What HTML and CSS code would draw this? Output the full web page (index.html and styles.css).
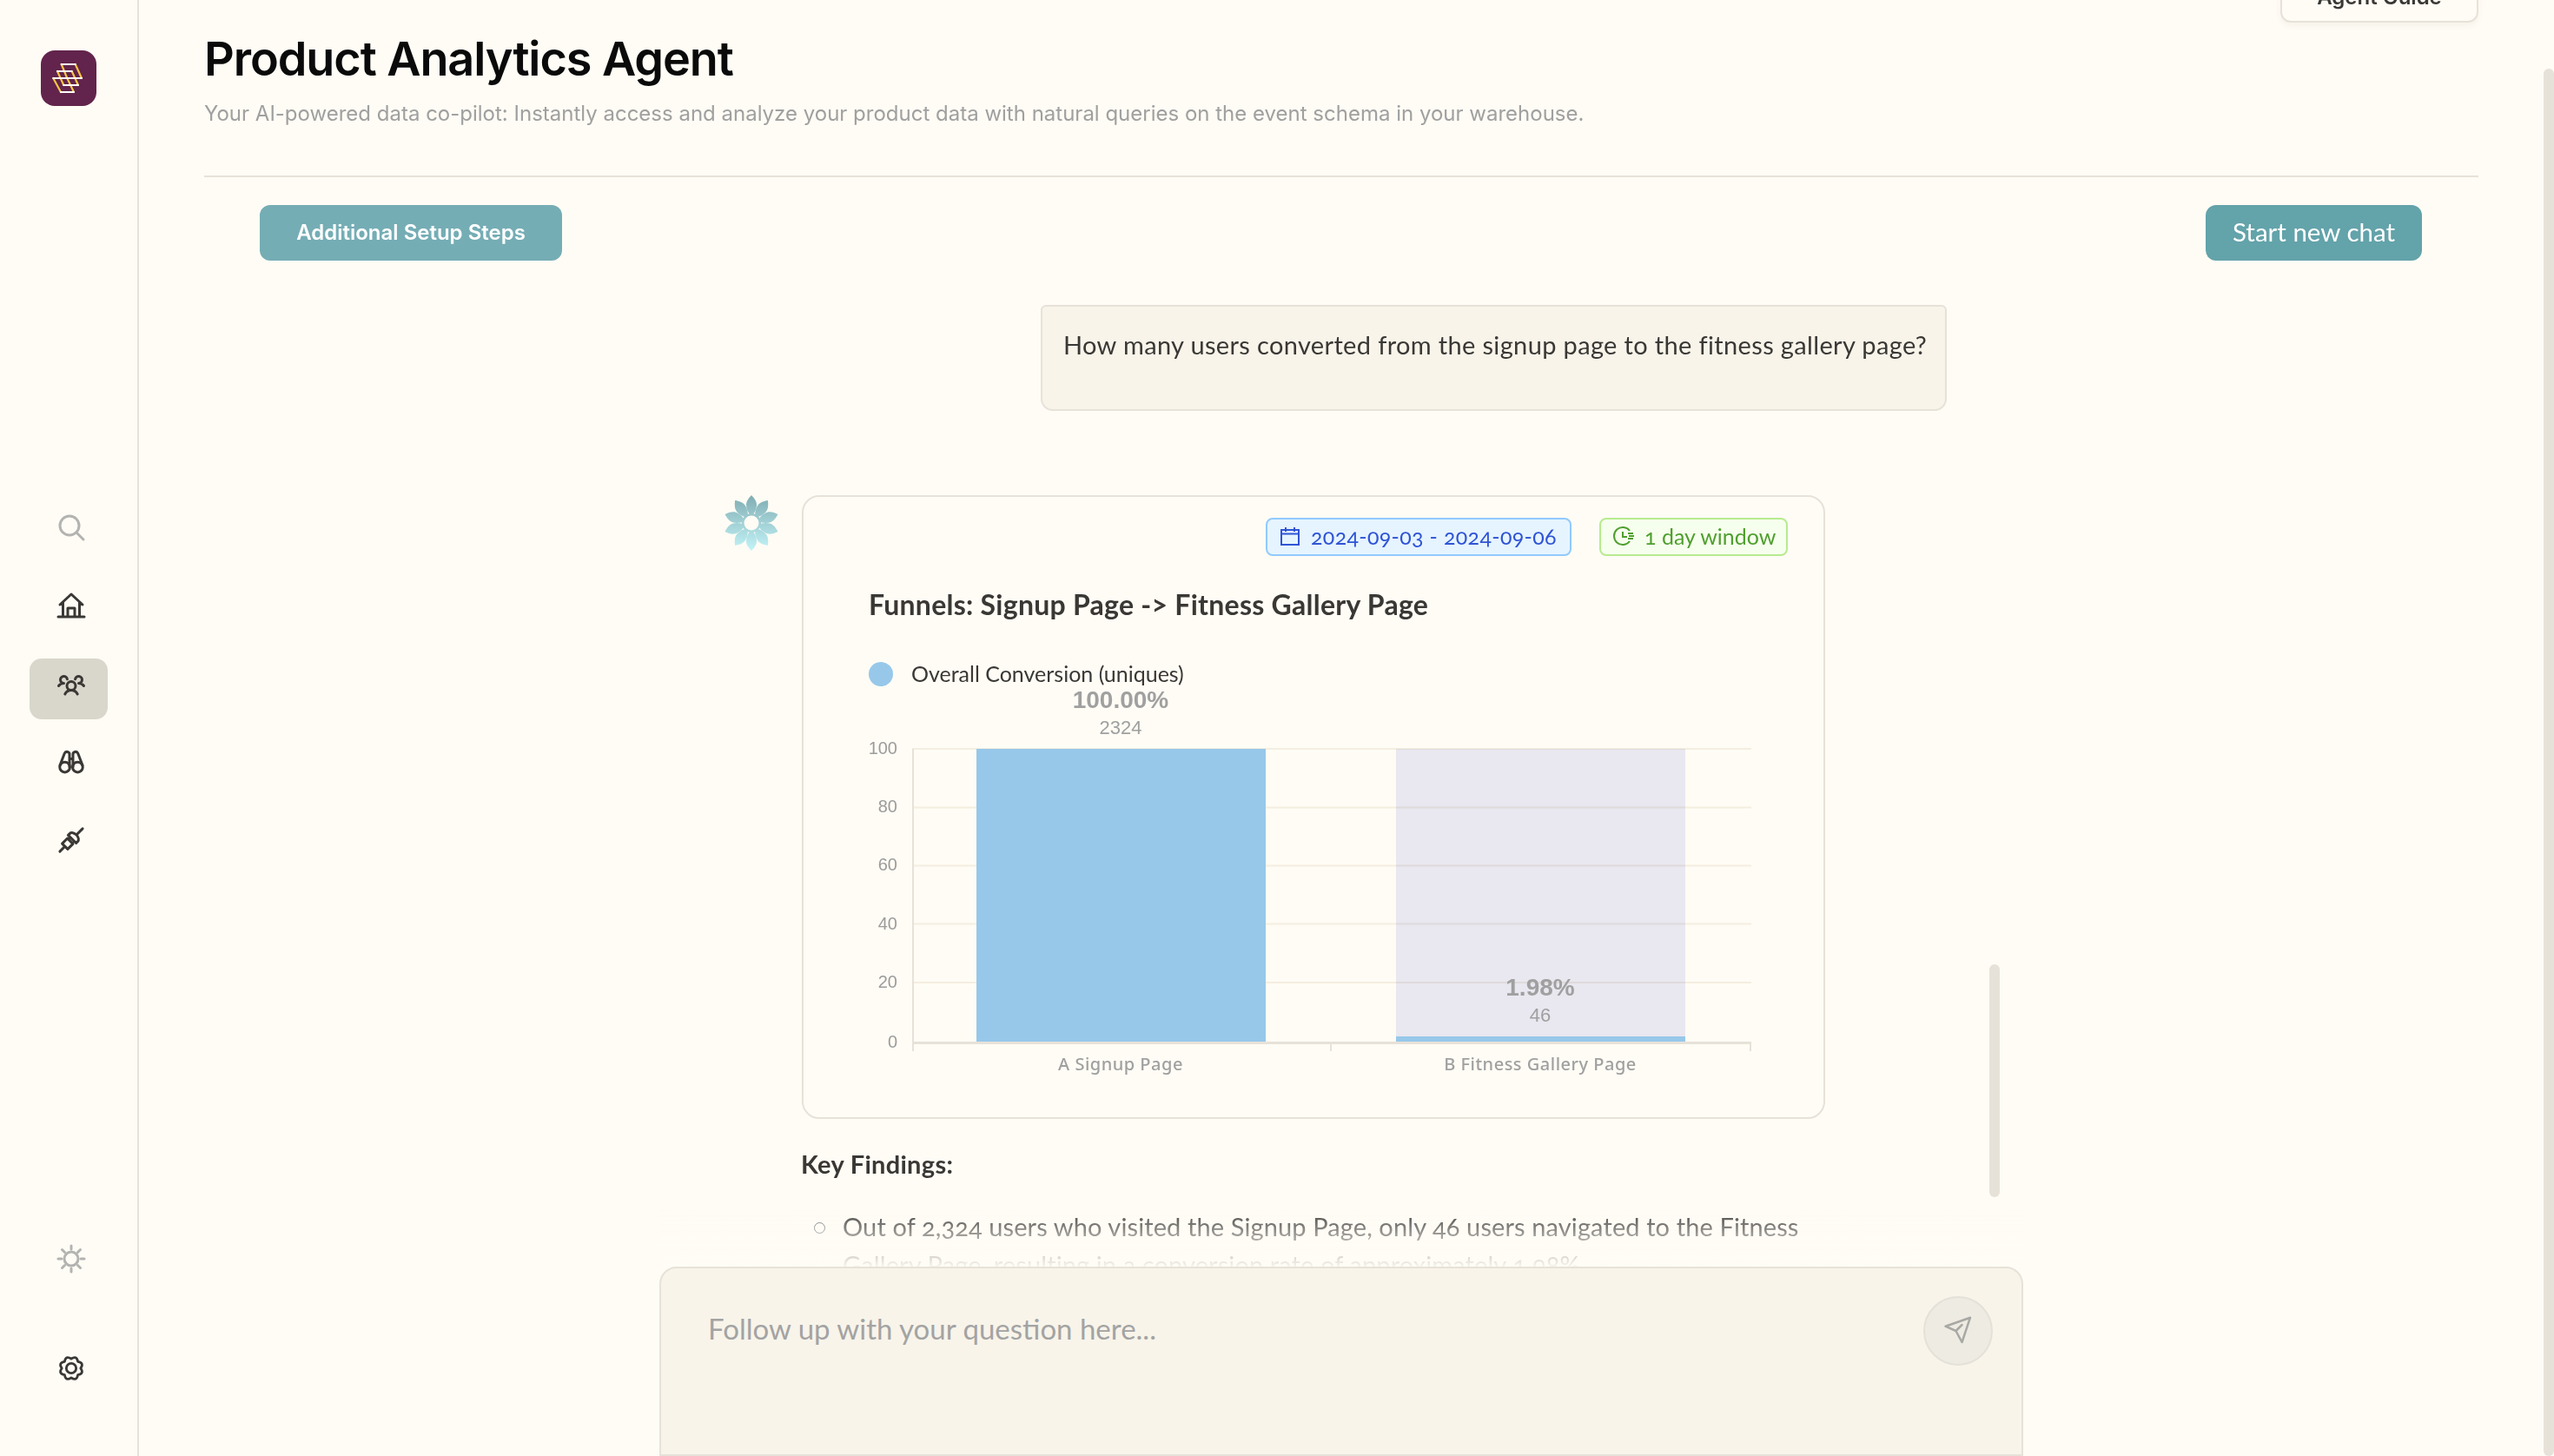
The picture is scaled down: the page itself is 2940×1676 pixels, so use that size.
FILE: index.html
```html
<!DOCTYPE html>
<html lang="en">
<head>
<meta charset="utf-8">
<title>Product Analytics Agent</title>
<link rel="stylesheet" href="styles.css">
</head>
<body>
<div class="app">
  <aside class="sidebar">
    <div class="logo">
      <svg viewBox="0 0 64 64" width="64" height="64" fill="none" stroke-width="2.2" stroke-linecap="round">
        <g stroke="#f6c445">
          <path d="M23.7 16L30.3 32M39.7 16L47 32M19 24L26.3 40M35.7 24L43 40M14.3 32L23 48M30.3 32L38 48"/>
        </g>
        <g stroke="#ffffff">
          <path d="M23.7 16H39.7M30.3 32H47M19 24H35.7M26.3 40H43M14.3 32H30.3M23 48H38"/>
        </g>
      </svg>
    </div>
    <nav class="nav">
      <div class="nav-item muted">
        <svg class="icon" viewBox="0 0 32 32"><circle cx="14" cy="14" r="11"/><path d="M22 22l8 8"/></svg>
      </div>
      <div class="nav-item">
        <svg class="icon" viewBox="0 0 32 32"><path d="M3 15L16 3l13 12M6.500 12.500V28M25.500 12.500V28M1 29h30M12 28v-9h8v9"/></svg>
      </div>
      <div class="nav-item active">
        <svg class="icon" viewBox="0 0 256 256"><g stroke-width="24"><circle cx="128" cy="140" r="40"/><path d="M196 116a59.770 59.770 0 0 1 48 24M12 140a59.770 59.770 0 0 1 48-24M70.400 216a64.070 64.070 0 0 1 115.200 0M60 116A32 32 0 1 1 91.400 78M164.600 78A32 32 0 1 1 196 116"/></g></svg>
      </div>
      <div class="nav-item">
        <svg class="icon" viewBox="0 0 256 256"><g stroke-width="24"><circle cx="69" cy="176" r="47"/><circle cx="187" cy="176" r="47"/><path d="M24 160L66 50a24 24 0 0 1 46 12V176M232 160L190 50a24 24 0 0 0-46 12V176M112 100h32"/></g></svg>
      </div>
      <div class="nav-item">
        <svg class="icon" viewBox="0 0 256 256"><g stroke-width="24" transform="rotate(-45 128 128)"><path d="M-20 128H46M196 128H276M114 104h26M114 152h26M46 92h68v72H46zM140 76h20a36 52 0 0 1 36 52a36 52 0 0 1-36 52h-20z"/></g></svg>
      </div>
    </nav>
    <div class="nav nav-bottom">
      <div class="nav-item muted sun">
        <svg class="icon" viewBox="0 0 32 32"><circle cx="16" cy="16" r="8"/><path d="M16 1v4M16 27v4M1 16h4M27 16h4M5.500 5.500l3 3M23.500 23.500l3 3M5.500 26.500l3-3M23.500 8.500l3-3"/></svg>
      </div>
      <div class="nav-item">
        <svg class="icon" viewBox="-1 -1 34 34"><path d="M27.500 16Q32.200 22.700 24.100 24.100Q22.700 32.200 16 27.500Q9.300 32.200 7.900 24.100Q-.2 22.700 4.500 16Q-.2 9.300 7.900 7.900Q9.300 -.2 16 4.500Q22.700 -.2 24.100 7.900Q32.200 9.300 27.500 16Z"/><circle cx="16" cy="16" r="6"/></svg>
      </div>
    </div>
  </aside>

  <main class="main">
    <header class="header">
      <button class="guide">Agent Guide</button>
      <h1 class="title">Product Analytics Agent</h1>
      <p class="subtitle">Your AI-powered data co-pilot: Instantly access and analyze your product data with natural queries on the event schema in your warehouse.</p>
    </header>

    <div class="toolbar">
      <button class="btn btn-setup">Additional Setup Steps</button>
      <button class="btn btn-new">Start new chat</button>
    </div>

    <section class="chat">
      <div class="user-msg">How many users converted from the signup page to the fitness gallery page?</div>

      <div class="agent-msg">
        <svg class="flower" viewBox="-31 -32 62 64" width="62" height="64">
          <defs>
            <linearGradient id="petalGrad" x1="0" y1="0" x2="0" y2="1">
              <stop offset="0" stop-color="#80adb3"/>
              <stop offset="1" stop-color="#c3f4f8"/>
            </linearGradient>
            <path id="petal" d="M0-32C3-29 6-25 6-21C6-17 4-11 0-8C-4-11-6-17-6-21C-6-25-3-29 0-32Z"/>
            <mask id="flowerMask">
              <g fill="#fff">
                <use href="#petal"/>
                <use href="#petal" transform="rotate(36)"/>
                <use href="#petal" transform="rotate(72)"/>
                <use href="#petal" transform="rotate(108)"/>
                <use href="#petal" transform="rotate(144)"/>
                <use href="#petal" transform="rotate(180)"/>
                <use href="#petal" transform="rotate(216)"/>
                <use href="#petal" transform="rotate(252)"/>
                <use href="#petal" transform="rotate(288)"/>
                <use href="#petal" transform="rotate(324)"/>
                <circle r="11"/>
              </g>
              <circle r="8.500" fill="#000"/>
            </mask>
          </defs>
          <rect x="-31" y="-32" width="62" height="64" fill="url(#petalGrad)" mask="url(#flowerMask)"/>
        </svg>

        <div class="answer">
          <div class="card">
            <div class="badges">
              <span class="badge badge-blue">
                <svg class="badge-icon" viewBox="0 0 22 22"><path d="M1 4h20v17H1zM1 8.500h20M6 1v5M16 1v5"/></svg>
                2024-09-03 - 2024-09-06
              </span>
              <span class="badge badge-green">
                <svg class="badge-icon" viewBox="0 0 24 22"><path d="M19 5A10 10 0 1 0 19 17M11 6v6h5M17 8h6M18 11h6M17 14h6"/></svg>
                1 day window
              </span>
            </div>
            <h2 class="card-title">Funnels: Signup Page -&gt; Fitness Gallery Page</h2>
            <div class="legend"><span class="legend-dot"></span>Overall Conversion (uniques)</div>
            <svg class="chart" viewBox="925 790 1174 496" width="1174" height="496">
              <rect class="bar-bg" x="1607" y="862" width="333" height="338"/>
              <g class="grid">
                <path d="M1050 862H2016M1050 929.500H2016M1050 996.500H2016M1050 1063.500H2016M1050 1131H2016"/>
              </g>
              <rect class="bar" x="1124" y="862" width="333" height="338"/>
              <rect class="bar" x="1607" y="1193" width="333" height="7"/>
              <path class="axis" d="M1051 862V1210M1532 1200V1210M2015 1200V1210"/>
              <path class="axis-base" d="M1050 1200.500H2016"/>
              <g class="y-labels">
                <text x="1033" y="868">100</text>
                <text x="1033" y="935">80</text>
                <text x="1033" y="1002">60</text>
                <text x="1033" y="1070">40</text>
                <text x="1033" y="1137">20</text>
                <text x="1033" y="1206">0</text>
              </g>
              <g class="bar-labels">
                <text class="pct" x="1290" y="815">100.00%</text>
                <text class="num" x="1290" y="845">2324</text>
                <text class="pct" x="1773" y="1146">1.98%</text>
                <text class="num" x="1773" y="1176">46</text>
              </g>
              <g class="x-labels">
                <text x="1290" y="1232">A Signup Page</text>
                <text x="1773" y="1232">B Fitness Gallery Page</text>
              </g>
            </svg>
          </div>
          <h3 class="findings">Key Findings:</h3>
          <ul class="findings-list">
            <li>Out of 2,324 users who visited the Signup Page, only 46 users navigated to the Fitness<br>Gallery Page, resulting in a conversion rate of approximately 1.98%.</li>
          </ul>
        </div>
      </div>
    </section>

    <span class="chat-scroll"></span>

    <div class="composer">
      <div class="composer-text">Follow up with your question here...</div>
      <button class="send">
        <svg viewBox="0 0 40 40" width="40" height="40"><path d="M34 4.700L5.500 14.700L17.500 20L24.500 33ZM17.500 20L24.500 13"/></svg>
      </button>
    </div>
  </main>
  <span class="page-scroll"></span>
</div>
</body>
</html>
```

FILE: styles.css
```css
* { box-sizing: border-box; }
html, body { margin: 0; padding: 0; height: 100%; overflow: hidden; }
body { background: #fffcf5; color: #3a3835; font-family: "Lato", "Open Sans", sans-serif; }
button { font: inherit; cursor: pointer; }

.app { position: relative; display: flex; height: 1676px; overflow: hidden; }

/* Sidebar */
.sidebar { flex: 0 0 160px; display: flex; flex-direction: column; align-items: flex-start; padding: 58px 0 66px 34px; border-right: 2px solid #e7e2d9; }
.logo { width: 64px; height: 64px; margin-left: 13px; border-radius: 16px; background: #62244c; }
.logo svg { display: block; }
.nav { display: flex; flex-direction: column; margin-top: 450px; }
.nav-bottom { margin-top: auto; }
.nav-item { width: 90px; height: 70px; margin-bottom: 20px; display: flex; align-items: center; padding-left: 32px; border-radius: 14px; }
.nav-bottom .nav-item { margin-bottom: 0; }
.nav-bottom .sun { margin-bottom: 56px; }
.nav-item.active { align-items: flex-start; padding-top: 14px; margin-top: 6px; margin-bottom: 14px; background: #d9d6cc; }
.icon { width: 32px; height: 32px; flex: none; fill: none; stroke: #3a3835; stroke-width: 3; stroke-linecap: round; stroke-linejoin: round; overflow: visible; }
.muted .icon { stroke: #b3b3b1; }

/* Main */
.main { position: relative; flex: 1; min-width: 0; }
.header { position: relative; margin: 0 87px 0 75px; padding: 36px 0 54px; border-bottom: 2px solid #e7e2d9; }
.title { margin: 0; font-family: "Inter", sans-serif; font-size: 54px; line-height: 64px; font-weight: 600; letter-spacing: -1.08px; color: #0a0a0a; }
.subtitle { margin: 14px 0 0; font-family: "Inter", sans-serif; font-size: 24px; line-height: 34px; color: #a0a0a0; }
.guide { position: absolute; top: -34px; right: 0; width: 228px; height: 60px; padding: 0; font-family: "Inter", sans-serif; font-size: 24px; font-weight: 600; color: #3a3835; background: #fffcf5; border: 2px solid #e7e2d9; border-radius: 12px; box-shadow: 0 4px 6px rgba(120, 110, 90, .06); }

.toolbar { display: flex; justify-content: space-between; margin-top: 32px; padding: 0 152px 0 139px; }
.btn { height: 64px; padding: 0 0 2px; border: 0; border-radius: 12px; color: #fff; }
.btn-setup { width: 348px; background: #75adb5; font-family: "Inter", sans-serif; font-size: 24px; font-weight: 600; }
.btn-new { width: 249px; padding-bottom: 4px; background: #63a3aa; font-size: 29.500px; }

/* Chat */
.chat { display: flex; flex-direction: column; padding-top: 51px; }
.user-msg { width: 1043px; height: 122px; margin-left: 1038px; padding: 22px 24px; font-size: 29px; line-height: 44px; letter-spacing: .35px; background: #f8f4ea; border: 2px solid #e7e2d9; border-radius: 6px 6px 14px 14px; white-space: nowrap; }

.agent-msg { display: flex; align-items: flex-start; margin: 97px 0 0 674px; }
.flower { flex: none; }
.answer { width: 1178px; margin-left: 27px; }

.card { width: 1178px; height: 718px; border: 2px solid #e7e2d9; border-radius: 20px; padding-top: 24px; }
.badges { display: flex; justify-content: flex-end; gap: 32px; padding-right: 41px; }
.badge { display: flex; align-items: center; height: 44px; padding: 0 14px 2px; font-size: 25px; border: 2px solid; border-radius: 8px; font-variant-numeric: oldstyle-nums; white-space: nowrap; }
.badge-blue { width: 352px; letter-spacing: .33px; color: #2f54d6; background: #e6f4ff; border-color: #91caff; }
.badge-green { width: 217px; color: #4f9f2f; background: #f6ffed; border-color: #b7eb8f; }
.badge-icon { width: 24px; height: 22px; flex: none; margin-right: 12px; fill: none; stroke: currentColor; stroke-width: 2; overflow: visible; }
.card-title { margin: 36px 0 0 75px; font-size: 32px; line-height: 40px; font-weight: 700; letter-spacing: .26px; color: #3a3835; }
.legend { display: flex; align-items: center; height: 28px; margin: 46px 0 0 75px; padding-bottom: 3px; font-size: 25px; }
.legend-dot { width: 28px; height: 28px; margin: 3px 21px 0 0; border-radius: 50%; background: #97c8ea; }
.chart { display: block; overflow: hidden; }
.bar { fill: #97c8ea; }
.bar-bg { fill: #e9e7ef; }
.grid path { stroke: #f4f1ea; stroke-width: 2; fill: none; mix-blend-mode: multiply; }
.axis { stroke: #e7e2d9; stroke-width: 2; fill: none; }
.axis-base { stroke: #e7e2d9; stroke-width: 3; fill: none; }
.y-labels text { font-family: "Liberation Sans", sans-serif; font-size: 20px; fill: #9c9c9c; text-anchor: end; }
.bar-labels text { font-family: "Liberation Sans", sans-serif; fill: #a0a0a0; text-anchor: middle; }
.bar-labels .pct { font-size: 28px; font-weight: 700; }
.bar-labels .num { font-size: 22px; }
.x-labels text { font-family: "Noto Sans", sans-serif; font-size: 20px; font-weight: 500; letter-spacing: .5px; fill: #a0a0a0; text-anchor: middle; }

.findings { margin: 30px 0 0 -1px; font-size: 29px; line-height: 44px; font-weight: 700; letter-spacing: .3px; color: #3a3835; }
.findings-list { margin: 28px 0 0; padding: 0 0 0 47px; list-style: none; font-size: 29px; line-height: 44px; letter-spacing: .11px; color: #3a3835; white-space: nowrap; font-variant-numeric: oldstyle-nums; }
.findings-list li { position: relative; }
.findings-list li::before { content: ""; position: absolute; left: -33px; top: 17px; width: 11px; height: 11px; border: 1.500px solid #666; border-radius: 50%; }

/* Scrollbars */
.chat-scroll { position: absolute; left: 2130px; top: 1110px; width: 12px; height: 268px; border-radius: 6px; background: #e7e2d9; }
.page-scroll { position: absolute; right: 0; top: 79px; bottom: 0; width: 12px; border-radius: 6px; background: #e7e2d9; }

/* Composer */
.composer { position: absolute; left: 599px; bottom: 0; width: 1570px; height: 218px; padding: 46px 54px; background: #f8f4ea; border: 2px solid #e7e2d9; border-radius: 20px 20px 0 0; }
.composer::before { content: ""; position: absolute; left: -2px; right: -2px; top: -70px; height: 68px; background: linear-gradient(to bottom, rgba(255, 252, 245, 0), rgba(255, 252, 245, .5) 45%, rgba(255, 252, 245, .96)); }
.composer-text { font-size: 33px; line-height: 46px; color: #a3a3a3; }
.send { position: absolute; top: 32px; right: 33px; width: 80px; height: 80px; padding: 0; display: flex; align-items: center; justify-content: center; border: 2px solid #e4e1d9; border-radius: 50%; background: #eeebe2; }
.send svg { fill: none; stroke: #a8a8a4; stroke-width: 2.500; stroke-linejoin: round; stroke-linecap: round; }
```
